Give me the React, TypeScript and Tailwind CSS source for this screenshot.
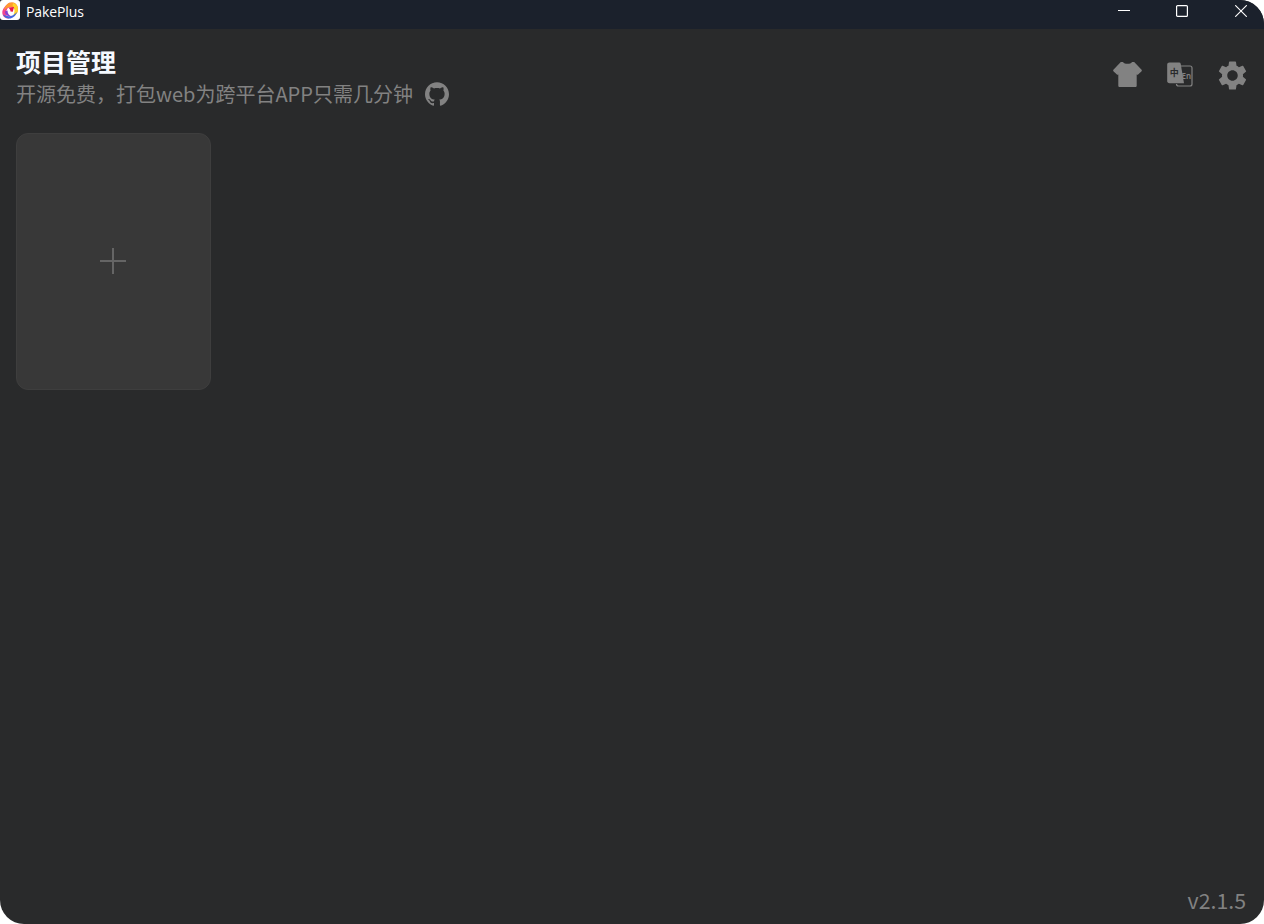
import { SiGithub } from "react-icons/si";
import { MdSettings } from "react-icons/md";

function AppLogo() {
  return (
    <svg viewBox="0 0 20 20" className="h-5 w-5 shrink-0">
      <rect width="20" height="20" rx="3" fill="#fff" />
      <path d="M9.5 2.5C6 5 2 9 2.3 13C2.7 17 6 18.800 9.5 18.5C6.5 17 5.5 13.5 6.5 10.5C7.5 8 9 6.5 11 6Z" fill="#f0458f" />
      <path d="M8 3.5C12 .8 16 2.5 17.5 6C18.5 9 18 12 16.5 14C16 10 14 7.5 11 7C8.5 6.5 6.5 8 4 10.5C4.5 7.5 6 5 8 3.5Z" fill="#ff9a2e" />
      <path d="M13 3C17 4 18.5 7.5 17.8 11C17.2 14 15 16 12.5 16.5C15 13 15.5 8.5 12.5 5.5Z" fill="#ffd32b" />
      <path d="M17 12C15.5 16.5 12 19 8.5 18.5C5.5 18 3.5 16.5 3.2 14.5C8 17.5 13 16.5 17 12Z" fill="#3f6be0" />
      <path d="M5 11.5C5 15 8 17 11.5 16.2C9 15.5 7.5 13.5 7.5 10.5Z" fill="#8a3fd0" />
      <path d="M8 7.5L14 7L12.8 11.8L10.5 11.5C10.5 9.8 9.5 8.5 8 7.5Z" fill="#e6194f" />
    </svg>
  );
}

function ShirtIcon() {
  return (
    <svg viewBox="0 0 30 26" className="h-[26px] w-[30px]" fill="currentColor">
      <path d="M7.8 0h2c1 1.3 2.700 1.8 4.700 1.8s3.700-.5 4.700-1.800h2L28.600 7.800c.4.500.4 1 0 1.400l-3.500 3.400c-.4.400-.9.300-1.200 0l-.2-.2V23.700c0 .8-.6 1.300-1.300 1.300H6.600c-.7 0-1.300-.5-1.300-1.300V12.400l-.2.200c-.3.300-.8.400-1.200 0L.4 9.200c-.4-.4-.4-.9 0-1.400Z" />
    </svg>
  );
}

function LanguageIcon() {
  return (
    <svg viewBox="0 0 26 26" className="h-[26px] w-[26px]">
      <path d="M13.5 4H23a2 2 0 0 1 2 2V22a2 2 0 0 1-2 2H11.500a2 2 0 0 1-2-2" fill="none" stroke="#828282" strokeWidth="1.2" />
      <path d="M2.500 .6h9.700c.8 0 1.300.4 1.500 1.100L17 21.200H2.500C1 21.200 .2 20.400 .2 19V2.800C.2 1.400 1 .6 2.500 .6Z" fill="#828282" />
      <text x="2.700" y="14.300" fill="#292a2b" className="font-['Noto_Sans_CJK_SC',sans-serif] text-[9px] font-bold">中</text>
      <text x="14.600" y="16.500" fill="#828282" className="font-['Noto_Sans',sans-serif] text-[8px] font-semibold">En</text>
    </svg>
  );
}

function TitleBar() {
  return (
    <div className="flex h-[29px] items-start justify-between bg-[#1b212c] text-white">
      <div className="flex items-start gap-1.5">
        <AppLogo />
        <span className="font-['Open_Sans',sans-serif] text-sm leading-6 tracking-[-0.1px]">PakePlus</span>
      </div>
      <div className="flex pt-[5px] pr-[17px]">
        <svg viewBox="0 0 12 12" className="mr-[46px] h-3 w-3 overflow-visible" stroke="currentColor">
          <path d="M0 5.5h12" />
        </svg>
        <svg viewBox="0 0 12 12" className="mr-[47px] h-3 w-3" fill="none" stroke="currentColor" strokeWidth="1.2">
          <rect x=".6" y=".6" width="10.8" height="10.8" rx="1" />
        </svg>
        <svg viewBox="0 0 12 12" className="h-3 w-3" stroke="currentColor" strokeWidth="1.1">
          <path d="M.2 .2l11.6 11.6M11.8 .2L.2 11.8" />
        </svg>
      </div>
    </div>
  );
}

export default function App() {
  return (
    <div className="h-[924px] w-full bg-white">
      <div className="flex h-full flex-col overflow-hidden rounded-tr-[24px] rounded-b-[24px] bg-[#292a2b] font-['Noto_Sans_CJK_SC',sans-serif]">
        <TitleBar />
        <header className="flex justify-between px-4 pt-4">
          <div>
            <h1 className="text-[25px] leading-8 font-bold text-[#f5f9ff]">项目管理</h1>
            <div className="flex items-center gap-3 pt-px text-[#828282]">
              <p className="text-[20px] leading-8">开源免费，打包web为跨平台APP只需几分钟</p>
              <SiGithub className="h-6 w-6" />
            </div>
          </div>
          <div className="flex h-[60px] items-center text-[#828282]">
            <ShirtIcon />
            <div className="ml-6">
              <LanguageIcon />
            </div>
            <MdSettings className="-mr-0.5 ml-[22px] h-[35px] w-[35px]" />
          </div>
        </header>
        <main className="flex-1 px-4 pt-[23px]">
          <button className="flex h-[257px] w-[195px] items-center justify-center rounded-xl border border-[#3e3e3e] bg-[#383838] pr-px pb-px">
            <svg viewBox="0 0 26 26" className="h-[26px] w-[26px]" stroke="#656565" strokeWidth="2">
              <path d="M13 0v26M0 13h26" />
            </svg>
          </button>
        </main>
        <footer className="flex justify-end pr-[18px] pb-2 text-[21.3px] leading-8 text-[#828282]">v2.1.5</footer>
      </div>
    </div>
  );
}
